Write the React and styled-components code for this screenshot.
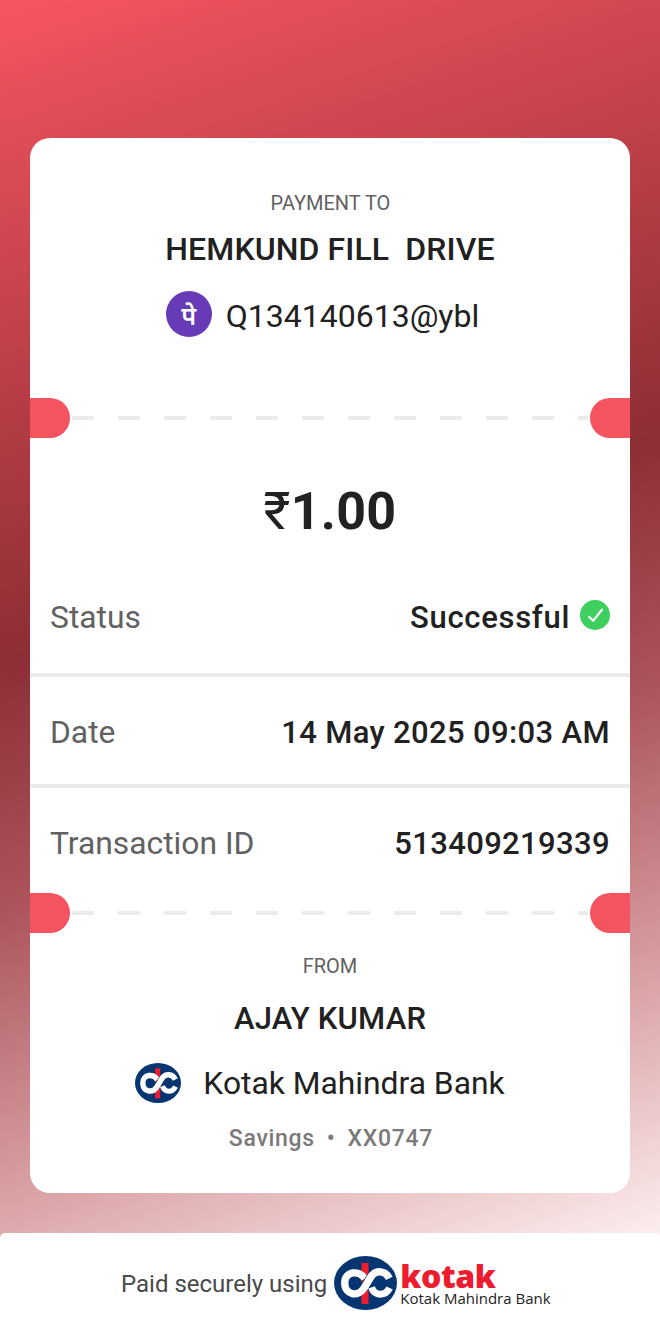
import React from 'react';
import styled, { createGlobalStyle } from 'styled-components';

const details = [
  { label: 'Status', value: 'Successful', success: true, height: 115, spacing: 0.7 },
  { label: 'Date', value: '14 May 2025 09:03 AM', height: 107, spacing: 0.36 },
  { label: 'Transaction ID', value: '513409219339', height: 105, spacing: 0.36 },
];

function KotakEmblem({ width, height }) {
  return (
    <svg width={width} height={height} viewBox="0 0 188 162" preserveAspectRatio="none" fill="none">
      <ellipse cx="94" cy="81" rx="94" ry="81" fill="#063672" />
      <path d="M82 21H103V144H82Z" fill="#ed1c2e" />
      <path d="M92 68C76 42 32 44 32 81" stroke="#fff" strokeWidth="22" />
      <path d="M90 97L114 61" stroke="#063672" strokeWidth="30" />
      <path d="M32 80C32 118 72 124 90 96L108 66C124 38 154 44 165 67" stroke="#fff" strokeWidth="22" />
      <path d="M112 94C122 122 154 120 166 96" stroke="#fff" strokeWidth="21" />
    </svg>
  );
}

function Tear() {
  return (
    <TearRow>
      <Notch $side="left" />
      <Dashes />
      <Notch $side="right" />
    </TearRow>
  );
}

function App() {
  return (
    <>
      <GlobalStyle />
      <Page>
        <Backdrop>
          <Receipt>
            <Payee>
              <Caption $offset={1}>PAYMENT TO</Caption>
              <Name $size={32} $top={16} $spacing={0.1}>HEMKUND FILL&nbsp; DRIVE</Name>
              <Handle>
                <PhonePe>पे</PhonePe>
                <HandleText>Q134140613@ybl</HandleText>
              </Handle>
            </Payee>
            <Tear />
            <Amount><Rupee>₹</Rupee>1.00</Amount>
            <Details>
              {details.map((row) => (
                <DetailRow key={row.label} $height={row.height}>
                  <Label>{row.label}</Label>
                  <Value $spacing={row.spacing}>
                    {row.value}
                    {row.success && (
                      <StatusIcon width="30" height="30" viewBox="0 0 30 30" fill="none">
                        <circle cx="15" cy="15" r="15" fill="#3ecf5e" />
                        <path d="M8.5 16.2L13.2 20.7L22.5 9" stroke="#fff" strokeWidth="2.2" />
                      </StatusIcon>
                    )}
                  </Value>
                </DetailRow>
              ))}
            </Details>
            <Tear />
            <Payer>
              <Caption $offset={0}>FROM</Caption>
              <Name $size={31} $top={23} $spacing={0.2}>AJAY KUMAR</Name>
              <Bank>
                <KotakEmblem width={46} height={40} />
                <BankName>Kotak Mahindra Bank</BankName>
              </Bank>
              <Account>
                <span>Savings</span>
                <span>•</span>
                <span>XX0747</span>
              </Account>
            </Payer>
          </Receipt>
        </Backdrop>
        <Footer>
          <FooterText>Paid securely using</FooterText>
          <KotakEmblem width={63} height={54} />
          <Wordmark>
            <Brand>kotak</Brand>
            <BrandSub>Kotak Mahindra Bank</BrandSub>
          </Wordmark>
        </Footer>
      </Page>
    </>
  );
}

export default App;

const GlobalStyle = createGlobalStyle`
  * {
    box-sizing: border-box;
  }

  body {
    margin: 0;
    font-family: Roboto, 'Noto Sans', sans-serif;
    color: #212121;
  }
`;

const Page = styled.main`
  display: flex;
  flex-direction: column;
  width: 660px;
  height: 1333px;
  overflow: hidden;
  background: linear-gradient(
    161deg,
    #f65560 0%,
    #8d2e35 42.5%,
    #ac545c 58.5%,
    #dda8ab 78.5%,
    #fdf0f0 94%
  );
`;

const Backdrop = styled.div`
  height: 1233px;
  padding: 138px 30px 40px;
`;

const Receipt = styled.section`
  display: flex;
  flex-direction: column;
  height: 1055px;
  border-radius: 20px;
  background: #fff;
  overflow: hidden;
`;

const Payee = styled.div`
  display: flex;
  flex-direction: column;
  align-items: center;
  height: 260px;
  padding-top: 53px;
`;

const Caption = styled.div`
  padding-left: ${({ $offset }) => $offset}px;
  font-size: 20px;
  line-height: 24px;
  color: #616161;
`;

const Name = styled.div`
  margin-top: ${({ $top }) => $top}px;
  font-size: ${({ $size }) => $size}px;
  font-weight: 500;
  line-height: 36px;
  letter-spacing: ${({ $spacing }) => $spacing}px;
  white-space: nowrap;
`;

const Handle = styled.div`
  display: flex;
  align-items: center;
  gap: 14px;
  margin-top: 24px;
  padding-right: 15px;
`;

const PhonePe = styled.div`
  width: 46px;
  height: 46px;
  padding-top: 3px;
  border-radius: 50%;
  background: #673ab7;
  color: #fff;
  font-size: 25px;
  font-weight: 600;
  line-height: 46px;
  text-align: center;
`;

const HandleText = styled.span`
  padding-top: 3px;
  font-size: 32px;
`;

const TearRow = styled.div`
  display: flex;
  align-items: center;
  height: 40px;
  flex: none;
`;

const Notch = styled.div`
  width: 40px;
  height: 40px;
  background: #f45460;
  border-radius: ${({ $side }) => ($side === 'left' ? '0 20px 20px 0' : '20px 0 0 20px')};
`;

const Dashes = styled.div`
  flex: 1;
  height: 4px;
  margin: 0 2px;
  background: repeating-linear-gradient(to right, #ebebeb 0 22px, transparent 22px 46px);
`;

const Amount = styled.div`
  height: 120px;
  padding-top: 43px;
  text-align: center;
  font-size: 52px;
  font-weight: 700;
  line-height: 62px;
  letter-spacing: 0.3px;
`;

const Rupee = styled.span`
  font-weight: 400;
`;

const Details = styled.div`
  height: 335px;
`;

const DetailRow = styled.div`
  display: flex;
  align-items: center;
  justify-content: space-between;
  box-sizing: content-box;
  height: ${({ $height }) => $height}px;
  padding: 0 20px;

  & + & {
    border-top: 4px solid #ebebeb;
  }

  &:last-child span {
    padding-top: 5px;
  }
`;

const Label = styled.span`
  padding-top: 2px;
  font-size: 31.8px;
  color: #616161;
`;

const Value = styled.span`
  display: flex;
  align-items: center;
  gap: 10px;
  padding-top: 3px;
  font-size: 31px;
  font-weight: 500;
  letter-spacing: ${({ $spacing }) => $spacing}px;
`;

const StatusIcon = styled.svg`
  margin-bottom: 5px;
`;

const Payer = styled.div`
  display: flex;
  flex-direction: column;
  align-items: center;
  padding-top: 21px;
`;

const Bank = styled.div`
  display: flex;
  align-items: center;
  gap: 22px;
  margin-top: 26px;
  padding-right: 20px;
`;

const BankName = styled.span`
  font-size: 31.8px;
`;

const Account = styled.div`
  display: flex;
  gap: 12px;
  margin-top: 22px;
  padding-left: 2px;
  font-size: 23px;
  font-weight: 500;
  letter-spacing: 0.7px;
  color: #7a7a7a;
`;

const Footer = styled.footer`
  display: flex;
  align-items: center;
  height: 100px;
  padding-left: 121px;
  border-radius: 5px 5px 0 0;
  background: #fff;
`;

const FooterText = styled.span`
  margin-right: 7px;
  padding-top: 2px;
  font-size: 24px;
  color: #4a4a4a;
`;

const Wordmark = styled.div`
  display: flex;
  flex-direction: column;
  margin-left: 3px;
  padding-top: 4px;
`;

const Brand = styled.span`
  font-family: 'Open Sans', sans-serif;
  font-size: 32px;
  font-weight: 800;
  line-height: 26px;
  letter-spacing: -0.4px;
  color: #ed1c2e;
`;

const BrandSub = styled.span`
  font-family: 'Open Sans', sans-serif;
  font-size: 15px;
  line-height: 18px;
  color: #222;
  white-space: nowrap;
`;
